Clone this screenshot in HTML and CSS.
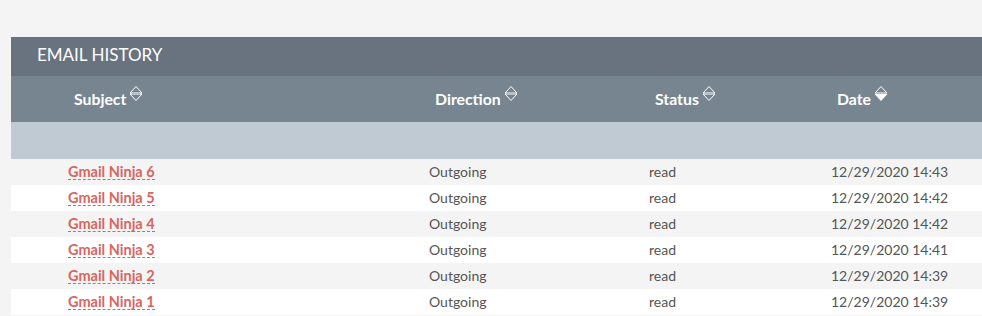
FILE: index.html
```
<!DOCTYPE html>
<html lang="en">
<head>
    <meta charset="UTF-8">
    <meta name="viewport" content="width=device-width, initial-scale=1.0">
    <title>Email History</title>
    <link rel="stylesheet" href="styles.css">
</head>
<body>
    <div class="panel">
        <div class="panel-title">EMAIL HISTORY</div>
        <div class="row head">
            <div class="cell">Subject <svg class="sort" viewBox="0 0 14 16"><polygon points="7,1 13,7.5 1,7.5" fill="none" stroke="#fff"/><polygon points="1,8.5 13,8.5 7,15" fill="none" stroke="#fff"/><rect x="3" y="7" width="8" height="2" fill="#b8c0c7"/></svg></div>
            <div class="cell">Direction <svg class="sort" viewBox="0 0 14 16"><polygon points="7,1 13,7.5 1,7.5" fill="none" stroke="#fff"/><polygon points="1,8.5 13,8.5 7,15" fill="none" stroke="#fff"/><rect x="3" y="7" width="8" height="2" fill="#b8c0c7"/></svg></div>
            <div class="cell">Status <svg class="sort" viewBox="0 0 14 16"><polygon points="7,1 13,7.5 1,7.5" fill="none" stroke="#fff"/><polygon points="1,8.5 13,8.5 7,15" fill="none" stroke="#fff"/><rect x="3" y="7" width="8" height="2" fill="#b8c0c7"/></svg></div>
            <div class="cell">Date <svg class="sort" viewBox="0 0 14 16"><polygon points="7,1 13,7.5 1,7.5" fill="none" stroke="#fff"/><polygon points="0.5,8.5 13.5,8.5 7,15.5" fill="#fff"/></svg></div>
        </div>
        <div class="row blank"></div>
        <div class="row"><a class="cell subj" href="#">Gmail Ninja 6</a><div class="cell">Outgoing</div><div class="cell">read</div><div class="cell">12/29/2020 14:43</div></div>
        <div class="row"><a class="cell subj" href="#">Gmail Ninja 5</a><div class="cell">Outgoing</div><div class="cell">read</div><div class="cell">12/29/2020 14:42</div></div>
        <div class="row"><a class="cell subj" href="#">Gmail Ninja 4</a><div class="cell">Outgoing</div><div class="cell">read</div><div class="cell">12/29/2020 14:42</div></div>
        <div class="row"><a class="cell subj" href="#">Gmail Ninja 3</a><div class="cell">Outgoing</div><div class="cell">read</div><div class="cell">12/29/2020 14:41</div></div>
        <div class="row"><a class="cell subj" href="#">Gmail Ninja 2</a><div class="cell">Outgoing</div><div class="cell">read</div><div class="cell">12/29/2020 14:39</div></div>
        <div class="row"><a class="cell subj" href="#">Gmail Ninja 1</a><div class="cell">Outgoing</div><div class="cell">read</div><div class="cell">12/29/2020 14:39</div></div>
    </div>
</body>
</html>
```

FILE: styles.css
```
body {
    margin: 0;
    background: #f4f4f4;
    font-family: Lato, "Open Sans", sans-serif;
    overflow: hidden;
}

.panel {
    margin: 37px 0 0 11px;
    width: 1100px;
    background: #fff;
}

.panel-title {
    background: #68737f;
    color: #fff;
    height: 39px;
    line-height: 36px;
    padding-left: 26px;
    font-size: 17px;
}

.row {
    display: grid;
    grid-template-columns: 361px 220px 182px 1fr;
    padding-left: 57px;
    height: 26px;
    box-sizing: border-box;
    padding-bottom: 1px;
    align-items: center;
    font-size: 14px;
    color: #555;
    background: #fff;
}

.row:nth-child(even) {
    background: #f4f4f4;
}

.row.head {
    background: #778591;
    height: 46px;
    padding-bottom: 2px;
    color: #fff;
    font-weight: bold;
    font-size: 15.8px;
}

.row.head .cell {
    padding-left: 6px;
    display: flex;
    align-items: center;
    gap: 3px;
}

.row.blank {
    background: #bfcad3;
    height: 37px;
}

.sort {
    width: 14px;
    height: 17px;
    margin-top: -9px;
}

.subj {
    justify-self: start;
    color: #d9655f;
    font-weight: bold;
    font-size: 14.5px;
    text-decoration: none;
    border-bottom: 1px dashed #d9655f;
    line-height: 15px;
}
```
